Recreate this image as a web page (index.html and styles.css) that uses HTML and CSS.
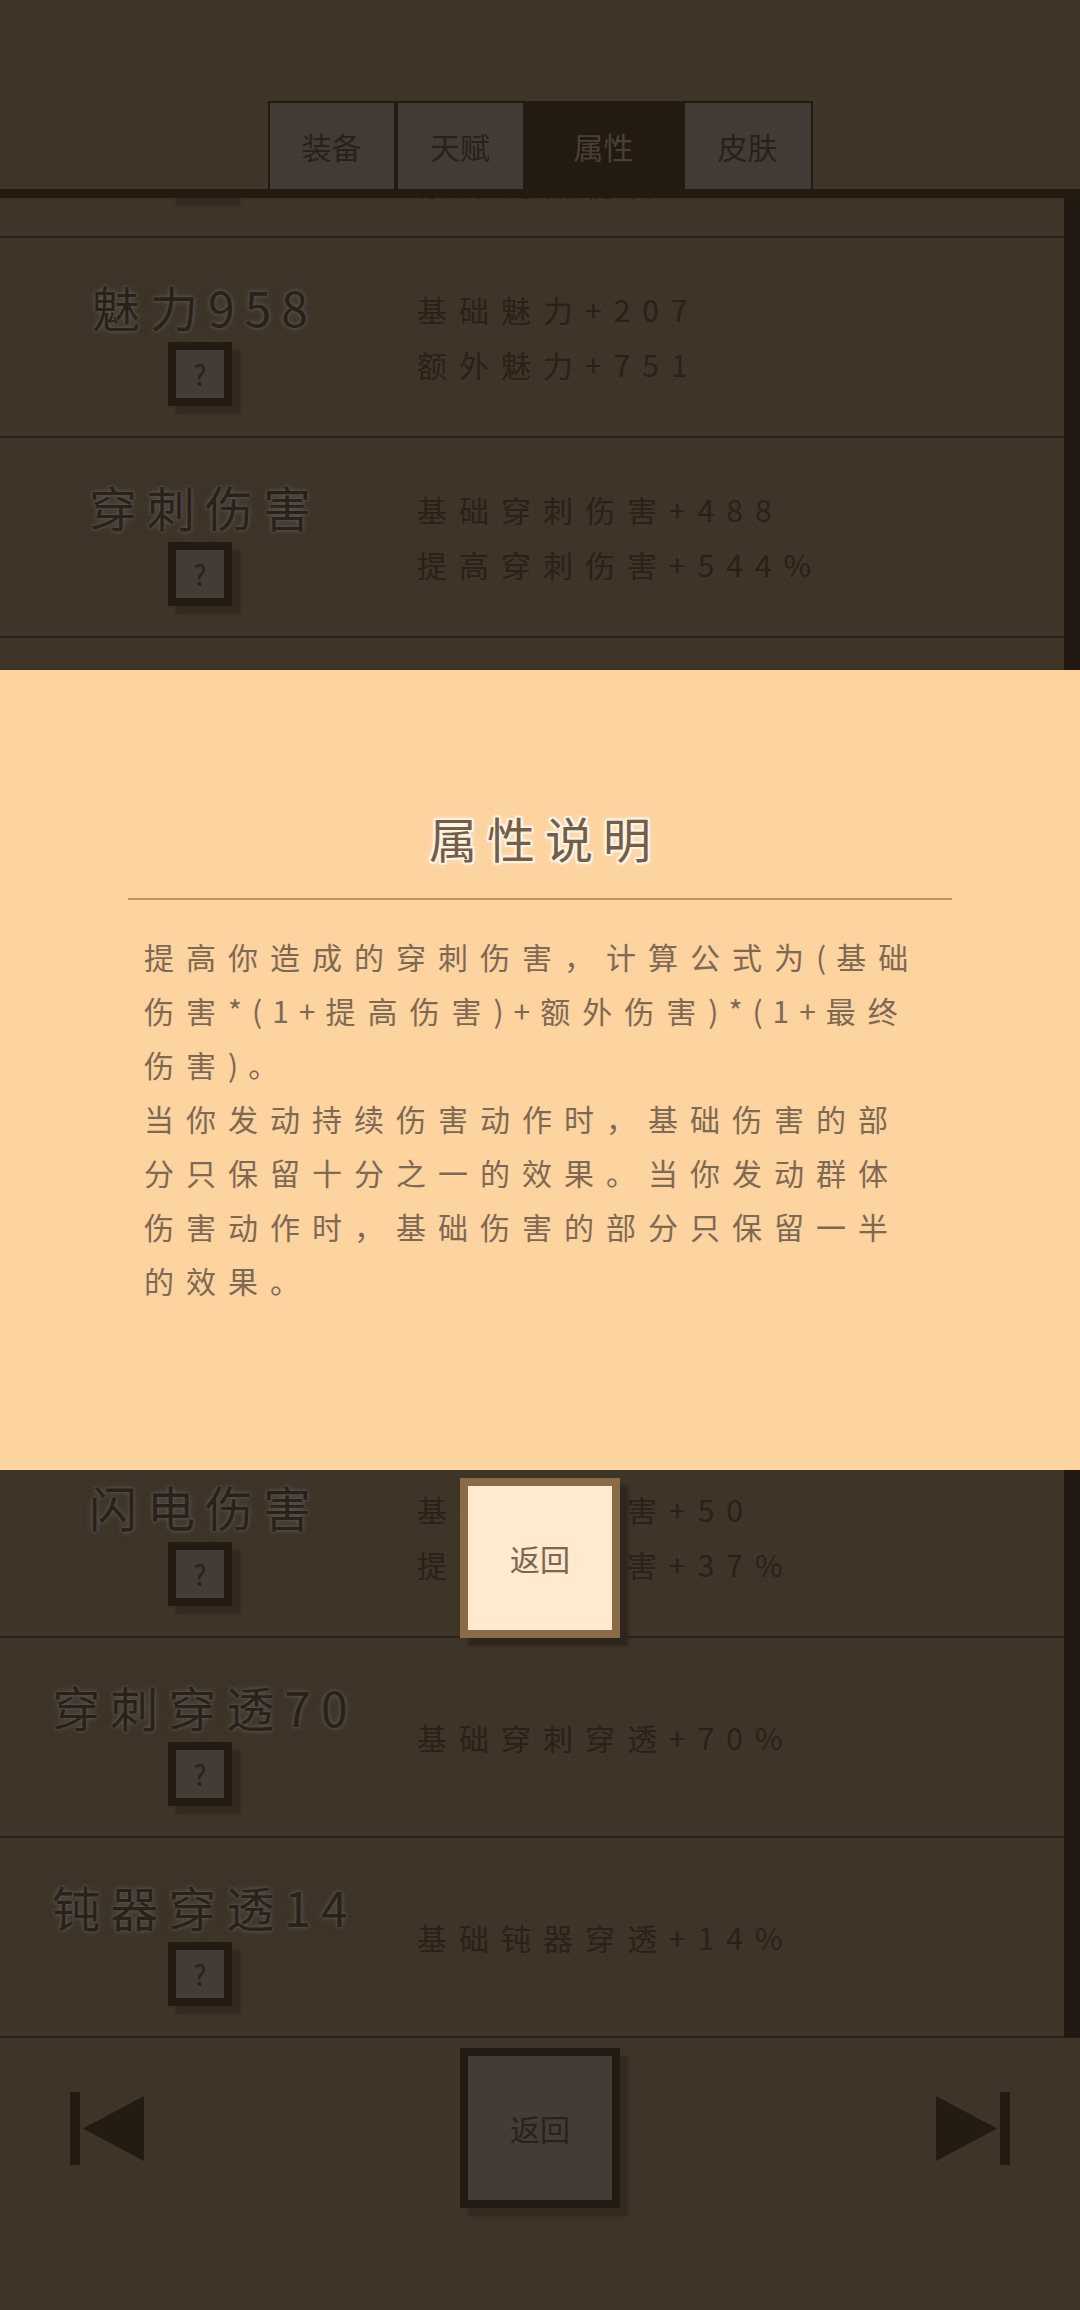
FILE: index.html
```html
<!DOCTYPE html>
<html lang="zh-CN">
<head>
<meta charset="utf-8">
<title>属性</title>
<link rel="stylesheet" href="styles.css">
</head>
<body>
<div class="screen">
  <div class="top"></div>
  <div class="tabs">
    <div class="tab t1">装备</div>
    <div class="tab t2">天赋</div>
    <div class="tab active">属性</div>
    <div class="tab t4">皮肤</div>
  </div>
  <div class="bar"></div>
  <div class="list-wrap">
    <div class="list">
      <div class="row first">
        <div class="left"><div class="name">钝器伤害</div><div class="qbtn">?</div></div>
        <div class="desc"><div>基础钝器伤害+120</div><div>提高钝器伤害+85%</div><div>额外钝器伤害+30</div></div>
      </div>
      <div class="row">
        <div class="left"><div class="name">魅力958</div><div class="qbtn">?</div></div>
        <div class="desc"><div>基础魅力+207</div><div>额外魅力+751</div></div>
      </div>
      <div class="row">
        <div class="left"><div class="name">穿刺伤害</div><div class="qbtn">?</div></div>
        <div class="desc"><div>基础穿刺伤害+488</div><div>提高穿刺伤害+544%</div></div>
      </div>
      <div class="row">
        <div class="left"><div class="name">切割伤害</div><div class="qbtn">?</div></div>
        <div class="desc"><div>基础切割伤害+96</div><div>提高切割伤害+120%</div></div>
      </div>
      <div class="row">
        <div class="left"><div class="name">火焰伤害</div><div class="qbtn">?</div></div>
        <div class="desc"><div>基础火焰伤害+64</div><div>提高火焰伤害+42%</div></div>
      </div>
      <div class="row">
        <div class="left"><div class="name">寒冷伤害</div><div class="qbtn">?</div></div>
        <div class="desc"><div>基础寒冷伤害+58</div><div>提高寒冷伤害+40%</div></div>
      </div>
      <div class="row">
        <div class="left"><div class="name">毒素伤害</div><div class="qbtn">?</div></div>
        <div class="desc"><div>基础毒素伤害+52</div><div>提高毒素伤害+39%</div></div>
      </div>
      <div class="row">
        <div class="left"><div class="name">闪电伤害</div><div class="qbtn">?</div></div>
        <div class="desc"><div>基础闪电伤害+50</div><div>提高闪电伤害+37%</div></div>
      </div>
      <div class="row">
        <div class="left"><div class="name">穿刺穿透70</div><div class="qbtn">?</div></div>
        <div class="desc"><div>基础穿刺穿透+70%</div></div>
      </div>
      <div class="row">
        <div class="left"><div class="name">钝器穿透14</div><div class="qbtn">?</div></div>
        <div class="desc"><div>基础钝器穿透+14%</div></div>
      </div>
    </div>
    <div class="scrollbar"></div>
  </div>
  <div class="nav">
    <svg class="arrow" width="74" height="73" viewBox="0 0 74 73"><rect x="0" y="0" width="10" height="73" fill="#241b12"/><polygon points="13,36.5 74,4 74,69" fill="#241b12"/></svg>
    <div class="back">返回</div>
    <svg class="arrow" width="74" height="73" viewBox="0 0 74 73"><polygon points="0,4 61,36.5 0,69" fill="#241b12"/><rect x="64" y="0" width="10" height="73" fill="#241b12"/></svg>
  </div>

  <div class="modal">
    <div class="modal-title">属性说明</div>
    <div class="divider"></div>
    <div class="modal-body">提高你造成的穿刺伤害，计算公式为<span class="n">(</span>基础<br>伤害<span class="n">*(1+</span>提高伤害<span class="n">)+</span>额外伤害<span class="n">)*(1+</span>最终<br>伤害<span class="n">)</span>。<br>当你发动持续伤害动作时，基础伤害的部<br>分只保留十分之一的效果。当你发动群体<br>伤害动作时，基础伤害的部分只保留一半<br>的效果。</div>
  </div>
  <div class="modal-back">返回</div>
</div>
</body>
</html>
```
FILE: styles.css
```css
* { box-sizing: border-box; margin: 0; padding: 0; }
html, body { width: 1080px; height: 2310px; overflow: hidden; }
body {
  background: #3e3428;
  font-family: "Noto Sans CJK SC", "Noto Sans", sans-serif;
  color: #2a2118;
}
.screen { position: relative; width: 1080px; height: 2310px; }
.top { height: 101px; }

.tabs {
  display: flex;
  width: 545px;
  margin: 0 auto;
  padding: 2px 2px 0 2px;
  background: #231a12;
}
.tab {
  height: 86px;
  display: flex;
  align-items: center;
  justify-content: center;
  font-size: 30px;
  background: #423a35;
  color: #2a2018;
}
.t1 { width: 124px; }
.t2 { width: 125px; margin-left: 4px; }
.tab.active { width: 162px; background: #231a12; color: #4a4037; }
.t4 { width: 126px; }
.bar { height: 9px; background: #231a12; }

.list-wrap { display: flex; height: 1840px; }
.list { width: 1064px; overflow: hidden; }
.scrollbar { width: 16px; background: #221a12; }

.row {
  display: flex;
  height: 200px;
  border-bottom: 2px solid #2a2118;
}
.row.first { margin-top: -160px; }
.left {
  width: 400px;
  display: flex;
  flex-direction: column;
  align-items: center;
  justify-content: center;
  padding-top: 10px;
}
.row.first .left { padding-top: 0; padding-bottom: 8px; }
.row.first .desc { padding-bottom: 18px; }
.name {
  font-size: 48px;
  line-height: 56px;
  letter-spacing: 10px;
  padding-left: 10px;
  color: #2a2118;
  white-space: nowrap;
  text-shadow: 0 0 3px #5c5550, 0 0 5px #55504a, 0 0 8px #4a443f;
}
.qbtn {
  margin-top: 8px;
  width: 64px;
  height: 64px;
  border: 8px solid #231a12;
  background: #433b36;
  box-shadow: 8px 8px 2px #33291f;
  display: flex;
  align-items: center;
  justify-content: center;
  font-size: 28px;
  color: #2a2118;
}
.desc {
  flex: 1;
  display: flex;
  flex-direction: column;
  justify-content: center;
  padding-left: 17px;
  font-size: 30px;
  line-height: 55px;
  letter-spacing: 12px;
  white-space: nowrap;
}

.nav {
  display: flex;
  justify-content: space-between;
  align-items: center;
  padding: 10px 70px 0 70px;
}
.arrow { display: block; }
.back {
  width: 160px;
  height: 160px;
  border: 8px solid #231a12;
  background: #433b36;
  box-shadow: 8px 8px 2px #33291f;
  display: flex;
  align-items: center;
  justify-content: center;
  font-size: 30px;
  color: #2a2118;
}

.modal {
  position: absolute;
  left: 0;
  top: 670px;
  width: 1080px;
  height: 800px;
  background: #fdd3a0;
  padding-top: 139px;
}
.modal-title {
  text-align: center;
  font-size: 48px;
  line-height: 56px;
  letter-spacing: 10px;
  padding-left: 10px;
  color: #725e49;
  text-shadow: 2px 0 0 #fff3e2, -2px 0 0 #fff3e2, 0 2px 0 #fff3e2, 0 -2px 0 #fff3e2,
    2px 2px 1px #fff3e2, -2px -2px 1px #fff3e2, 2px -2px 1px #fff3e2, -2px 2px 1px #fff3e2,
    0 0 6px #ffeedb;
}
.divider {
  margin: 33px 128px 0 128px;
  height: 2px;
  background: #c1935c;
}
.modal-body {
  margin-top: 29px;
  padding-left: 144px;
  font-size: 30px;
  line-height: 54px;
  letter-spacing: 12px;
  white-space: nowrap;
  color: #7e6953;
}
.modal-body .n { letter-spacing: 10px; }
.modal-back {
  position: absolute;
  left: 460px;
  top: 1478px;
  width: 160px;
  height: 160px;
  border: 8px solid #8a6b47;
  background: #ffe9cf;
  box-shadow: 8px 8px 3px #2e261c;
  display: flex;
  align-items: center;
  justify-content: center;
  font-size: 30px;
  color: #7a6651;
}
```
